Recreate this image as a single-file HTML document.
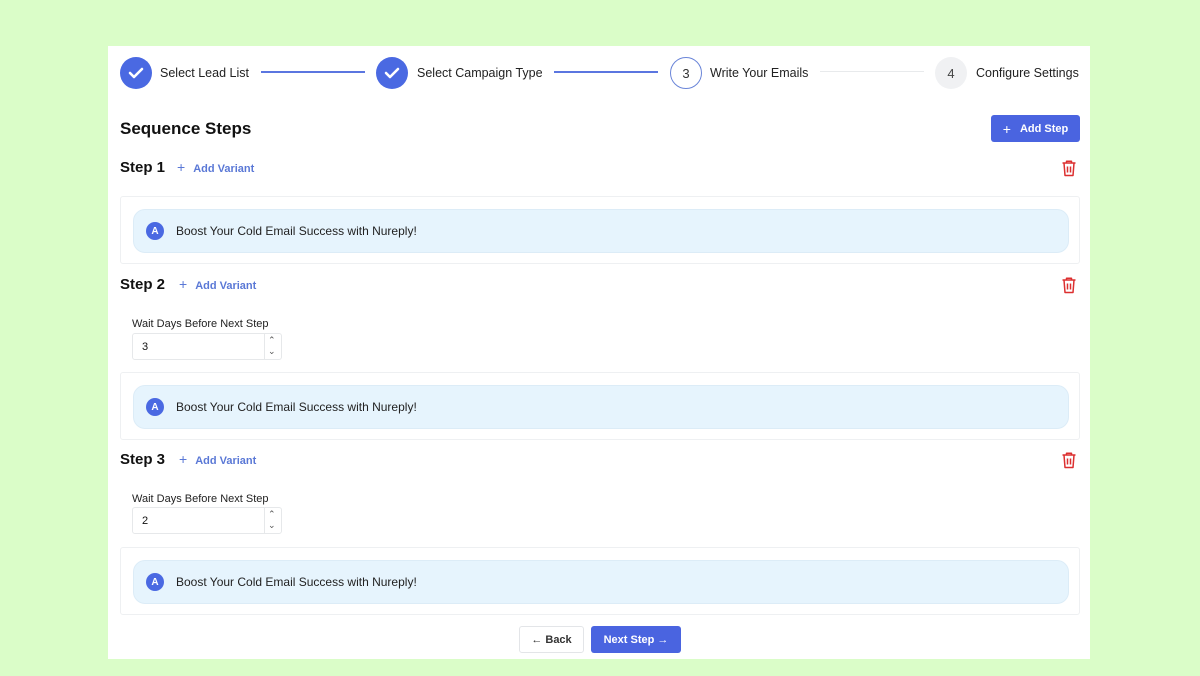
<!DOCTYPE html>
<html><head><meta charset="utf-8"><style>
*{box-sizing:border-box;margin:0;padding:0}
body{width:1200px;height:676px;background:#dafdc8;font-family:"Liberation Sans",sans-serif;position:relative;overflow:hidden;color:#111}
.panel{position:absolute;left:108px;top:46px;width:982px;height:613px;background:#fff}
.a{position:absolute}
.circ{width:32px;height:32px;border-radius:50%;display:flex;align-items:center;justify-content:center;font-size:13px}
.done{background:#4a69e2}
.lbl{font-size:12.5px;color:#222;top:66px}
.line{height:2px;top:71px}
.step{font-size:15px;font-weight:bold;color:#111}
.av{font-size:11px;color:#5a78d6;font-weight:bold}
.card{left:120px;width:960px;height:68px;border:1px solid #eef0f2;border-radius:3px}
.inner{position:absolute;left:12px;top:12px;width:936px;height:44px;background:#e6f4fd;border-radius:12px;border:1px solid #dcecf7}
.badge{position:absolute;left:12px;top:12px;width:18px;height:18px;border-radius:50%;background:#4a69e2;color:#fff;font-size:10px;font-weight:bold;display:flex;align-items:center;justify-content:center}
.inner span.t{position:absolute;left:42px;top:14px;font-size:12px;color:#222}
.wl{font-size:11px;color:#222;left:132px}
.inp{left:132px;width:150px;height:27px;border:1px solid #e6e8ea;border-radius:3px;font-size:11px}
.inp .v{position:absolute;left:9px;top:7px}
.inp .sp{position:absolute;left:131px;top:0;width:1px;height:25px;background:#e6e8ea}
.inp .ar{position:absolute;left:135px;font-size:9px;color:#555}
</style></head><body>
<div class="panel"></div>
<div class="a circ done" style="left:120px;top:57px"><svg width="16" height="12" viewBox="0 0 16 12"><path d="M2 6l4 4 8-8" stroke="#fff" stroke-width="2.6" fill="none" stroke-linecap="round" stroke-linejoin="round"/></svg></div>
<div class="a lbl" style="left:160px">Select Lead List</div>
<div class="a line" style="left:261px;width:104px;background:#5b76e0"></div>
<div class="a circ done" style="left:376px;top:57px"><svg width="16" height="12" viewBox="0 0 16 12"><path d="M2 6l4 4 8-8" stroke="#fff" stroke-width="2.6" fill="none" stroke-linecap="round" stroke-linejoin="round"/></svg></div>
<div class="a lbl" style="left:417px">Select Campaign Type</div>
<div class="a line" style="left:554px;width:104px;background:#5b76e0"></div>
<div class="a circ" style="left:670px;top:57px;border:1.5px solid #6a85d8;color:#333">3</div>
<div class="a lbl" style="left:710px">Write Your Emails</div>
<div class="a line" style="left:820px;width:104px;height:1px;background:#e8eaec"></div>
<div class="a circ" style="left:935px;top:57px;background:#f0f1f3;color:#444">4</div>
<div class="a lbl" style="left:976px">Configure Settings</div>
<div class="a" style="left:120px;top:119px;font-size:17px;font-weight:bold">Sequence Steps</div>
<div class="a" style="left:991px;top:115px;width:89px;height:27px;background:#4a64e0;border-radius:3px;color:#fff;font-size:11px;font-weight:bold;display:flex;align-items:center;justify-content:center;gap:9px"><span style="font-size:14px;font-weight:normal">+</span>Add Step</div>

<div class="a step" style="left:120px;top:159px">Step 1</div>
<div class="a av" style="left:177px;top:159px"><span style="font-size:14px;font-weight:normal;margin-right:8px">+</span>Add Variant</div>
<div class="a step" style="left:120px;top:276px">Step 2</div>
<div class="a av" style="left:179px;top:276px"><span style="font-size:14px;font-weight:normal;margin-right:8px">+</span>Add Variant</div>
<div class="a step" style="left:120px;top:451px">Step 3</div>
<div class="a av" style="left:179px;top:451px"><span style="font-size:14px;font-weight:normal;margin-right:8px">+</span>Add Variant</div>

<svg class="a" style="left:1061px;top:159px" width="16" height="18" viewBox="0 0 16 18"><path d="M1.5 4h13M5.5 4V2.2h5V4M3 4l1 12.5h8L13 4M6.5 7.5v6M9.5 7.5v6" stroke="#dc2f2f" stroke-width="1.5" fill="none" stroke-linejoin="round"/></svg>
<svg class="a" style="left:1061px;top:276px" width="16" height="18" viewBox="0 0 16 18"><path d="M1.5 4h13M5.5 4V2.2h5V4M3 4l1 12.5h8L13 4M6.5 7.5v6M9.5 7.5v6" stroke="#dc2f2f" stroke-width="1.5" fill="none" stroke-linejoin="round"/></svg>
<svg class="a" style="left:1061px;top:451px" width="16" height="18" viewBox="0 0 16 18"><path d="M1.5 4h13M5.5 4V2.2h5V4M3 4l1 12.5h8L13 4M6.5 7.5v6M9.5 7.5v6" stroke="#dc2f2f" stroke-width="1.5" fill="none" stroke-linejoin="round"/></svg>

<div class="a card" style="top:196px"><div class="inner"><div class="badge">A</div><span class="t">Boost Your Cold Email Success with Nureply!</span></div></div>

<div class="a wl" style="top:318px">Wait Days Before Next Step</div>
<div class="a inp" style="top:333px"><span class="v">3</span><div class="sp"></div><span class="ar" style="top:1px">&#8963;</span><span class="ar" style="top:12px">&#8964;</span></div>
<div class="a card" style="top:372px"><div class="inner"><div class="badge">A</div><span class="t">Boost Your Cold Email Success with Nureply!</span></div></div>

<div class="a wl" style="top:493px">Wait Days Before Next Step</div>
<div class="a inp" style="top:507px"><span class="v">2</span><div class="sp"></div><span class="ar" style="top:1px">&#8963;</span><span class="ar" style="top:12px">&#8964;</span></div>
<div class="a card" style="top:547px"><div class="inner"><div class="badge">A</div><span class="t">Boost Your Cold Email Success with Nureply!</span></div></div>

<div class="a" style="left:519px;top:626px;width:65px;height:27px;border:1px solid #e3e5e8;border-radius:3px;font-size:11px;font-weight:bold;color:#333;display:flex;align-items:center;justify-content:center">&#8592; Back</div>
<div class="a" style="left:591px;top:626px;width:90px;height:27px;background:#4a64e0;border-radius:3px;font-size:11px;font-weight:bold;color:#fff;display:flex;align-items:center;justify-content:center">Next Step &#8594;</div>
</body></html>
